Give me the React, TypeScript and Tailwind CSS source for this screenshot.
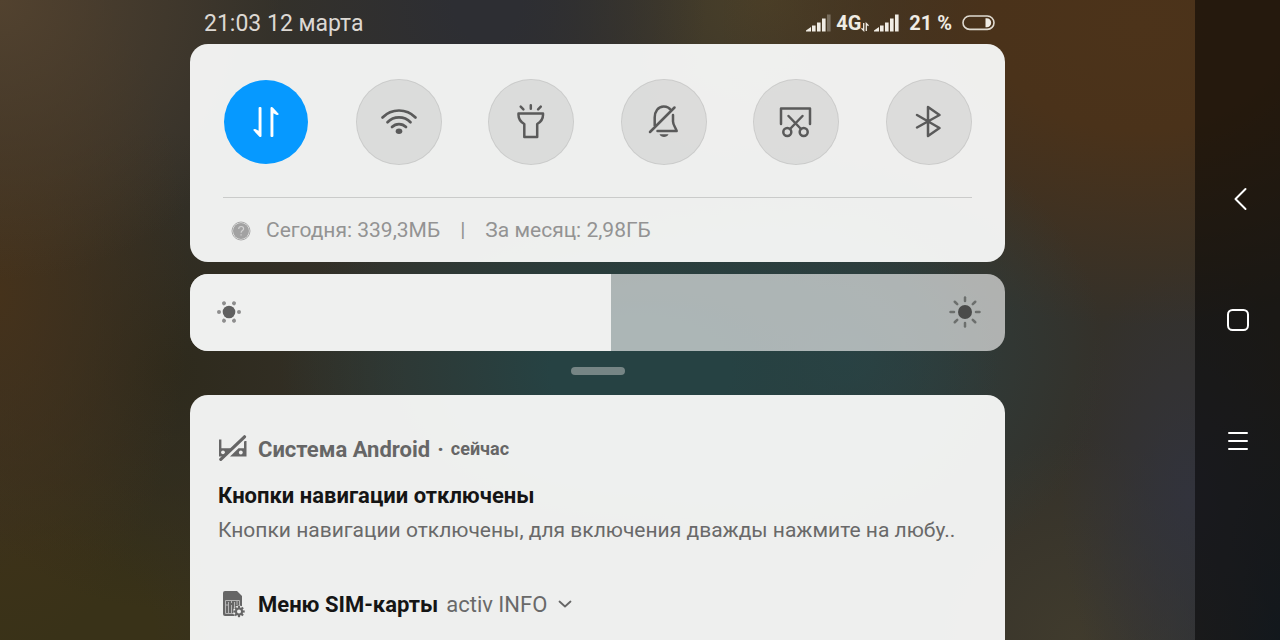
import { useState, type ReactNode } from "react";

function Toggle({ label, on = false, children }: { label: string; on?: boolean; children: ReactNode }) {
  const [active, setActive] = useState(on);
  return (
    <button
      type="button"
      aria-label={label}
      aria-pressed={active}
      onClick={() => setActive(!active)}
      className={
        active
          ? "flex size-[86px] items-center justify-center rounded-full bg-[#0699ff] bg-clip-padding border border-transparent text-white"
          : "flex size-[86px] items-center justify-center rounded-full border border-black/8 bg-black/8 text-[#5a5a5a]"
      }
    >
      <svg viewBox="0 0 40 40" className="size-10" fill="none" stroke="currentColor" strokeWidth="2.5" strokeLinecap="round" strokeLinejoin="round" aria-hidden="true">
        {children}
      </svg>
    </button>
  );
}

function Signal({ dimLast = false }: { dimLast?: boolean }) {
  return (
    <svg viewBox="0 0 25 18" className="h-[18px] w-[25px]" fill="currentColor" aria-hidden="true">
      <path d="M0 17.5v-1L5 13v4.500z" />
      <rect x="6" y="11.500" width="3.600" height="6" />
      <rect x="11" y="8.500" width="3.600" height="9" />
      <rect x="16" y="4.500" width="3.600" height="13" />
      <rect x="21" y="0.500" width="3.600" height="17" opacity={dimLast ? 0.3 : 1} />
    </svg>
  );
}

function StatusBar() {
  return (
    <header className="flex h-11 items-center justify-between pr-[10px] pl-[14px] pt-0.5 text-[#dcd8d3]">
      <time className="pt-0.5 text-[23px] leading-8">21:03 12 марта</time>
      <div className="flex items-center text-xl font-bold text-[#f0ece4]">
        <Signal dimLast />
        <span className="ml-[5px]">4G</span>
        <svg viewBox="0 0 8 10" className="mt-2 mr-[5px] h-[10px] w-2" fill="none" stroke="currentColor" strokeWidth="1.3" aria-hidden="true">
          <path d="M2.7 1v7.5L.5 6.3M5.3 9V1.5l2.2 2.2" />
        </svg>
        <Signal />
        <span className="ml-[10px]">21 %</span>
        <svg viewBox="0 0 33 16" className="ml-[10px] h-4 w-[33px]" aria-hidden="true">
          <rect x="1" y="1" width="31" height="13.4" rx="6.700" fill="none" stroke="currentColor" strokeWidth="1.600" opacity="0.9" />
          <path d="M23.500 3.200h1.200a4.500 4.500 0 0 1 0 9h-1.200z" fill="currentColor" />
        </svg>
      </div>
    </header>
  );
}

function QuickSettings() {
  return (
    <section aria-label="Быстрые настройки" className="rounded-[18px] bg-[#f5f6f5]/97 px-[33px] pt-[35px]">
      <div className="flex justify-between">
        <Toggle label="Мобильный интернет" on>
          <g stroke="none" fill="currentColor">
            <path d="M12.600 6c0-1.300 2.900-1.300 2.900 0v28c0 1.200-1.500 1.500-2.300.6l-6-6.600c.3-1 1.500-1.200 2.500-.7l2.900 1.500z" />
            <path d="M27.400 34c0 1.300-2.900 1.300-2.900 0V6c0-1.200 1.500-1.500 2.300-.6l6 6.600c-.3 1-1.500 1.200-2.500.7l-2.900-1.500z" />
          </g>
        </Toggle>
        <Toggle label="Wi-Fi">
          <path d="M3.500 15.500a23 23 0 0 1 33 0M8.500 20.200a16 16 0 0 1 23 0M13 25a9.800 9.800 0 0 1 14 0" strokeWidth="2.700" />
          <ellipse cx="20" cy="29.300" rx="3.300" ry="2.700" fill="currentColor" stroke="none" />
        </Toggle>
        <Toggle label="Фонарик">
          <path d="M7.500 11.500h24.500v1.500c0 4.500-2.200 7-5.800 9v13h-12.900V22c-3.600-2-5.800-4.500-5.800-9z" />
          <path d="M19.800 3.200v3.600M9.700 4.700l2.700 2.700M29.800 4.700l-2.700 2.700" />
        </Toggle>
        <Toggle label="Без звука">
          <path d="M10.700 24V15.500c0-6 3.400-11 9-11 3.300 0 5.800 1.400 7.300 4M29 13v6.500c0 3 2.200 5.500 3.700 9.500H13.500M30.500 5.500 6 30" />
          <path d="M15.500 32.300h9c-1.500 3.600-7.500 3.600-9 0z" fill="currentColor" stroke="none" />
        </Toggle>
        <Toggle label="Снимок экрана">
          <path d="M5 22V6.500h29V22M12.500 14 25 27M26.500 14 14 27" />
          <circle cx="11.300" cy="30" r="4" />
          <circle cx="27.700" cy="30" r="4" />
        </Toggle>
        <Toggle label="Bluetooth">
          <path d="M8 13l22.500 13L19 34V5l11.500 8L8 25.500" />
        </Toggle>
      </div>
      <div className="mt-8 flex h-[65px] items-center border-t border-black/15 pt-0.5 pl-2 text-[21px] whitespace-nowrap text-[#939393]">
        <svg viewBox="0 0 20 20" className="mr-[15px] size-5" fill="none" aria-hidden="true">
          <circle cx="10" cy="10" r="9" stroke="#a9a9a9" />
          <circle cx="10" cy="10" r="8" fill="#a2a2a2" />
          <path d="M7.700 8c.1-3.300 4.900-3.200 4.900-.3 0 1.800-2.500 2-2.500 4M10.100 13.300v1.300" stroke="#d2d2d2" strokeWidth="1.200" />
        </svg>
        <span>Сегодня: 339,3МБ</span>
        <span className="mx-5">|</span>
        <span>За месяц: 2,98ГБ</span>
      </div>
    </section>
  );
}

const rays = [0, 45, 90, 135, 180, 225, 270, 315];
const dots = [0, 60, 120, 180, 240, 300];

function Brightness() {
  const [value, setValue] = useState(51.7);
  return (
    <div className="relative mt-3 flex h-[77px] items-center justify-between overflow-hidden rounded-[18px] bg-[#f4f5f4]/65 px-6 pb-0.5">
      <span className="absolute inset-y-0 left-0 bg-[#eff0ef]" style={{ width: `${value}%` }} />
      <svg viewBox="-16 -16 32 32" className="relative -ml-px size-8" aria-hidden="true">
        <circle r="6.300" fill="#606060" />
        {dots.map((a) => (
          <circle key={a} cx="10" r="2" fill="#8e8e8e" transform={`rotate(${a})`} />
        ))}
      </svg>
      <svg viewBox="-16 -16 32 32" className="relative size-8" aria-hidden="true">
        <circle r="7" fill="#4a4b4a" />
        {rays.map((a) => (
          <path key={a} d="M11 0h3.500" stroke="#6c6f6d" strokeWidth="2.500" strokeLinecap="round" transform={`rotate(${a})`} />
        ))}
      </svg>
      <input
        type="range"
        aria-label="Яркость"
        min="0"
        max="100"
        step="0.1"
        value={value}
        onChange={(e) => setValue(Number(e.target.value))}
        className="absolute inset-0 size-full cursor-pointer opacity-0"
      />
    </div>
  );
}

function Notifications() {
  return (
    <main className="mt-5 flex-1 rounded-t-[18px] bg-[#f5f6f5]/97 px-7 pt-[38px]">
      <article>
        <div className="flex h-8 items-center text-[#666666]">
          <svg viewBox="0 0 30 28" className="mr-[10px] h-7 w-[30px]" aria-hidden="true">
            <path d="M1 4.500h2.400v8.700h9.600L5 21.500H1z" fill="currentColor" />
            <circle cx="5" cy="17.300" r="1.900" fill="#efefee" />
            <path d="M26 6h2.500v15.500H12l8.500-8.300H26z" fill="currentColor" />
            <circle cx="22.800" cy="17.500" r="1.900" fill="#efefee" />
            <path d="M5.500 25.500 29 3" stroke="#efefee" strokeWidth="1.300" />
            <path d="M2.800 24.300 26.500 1.800" stroke="currentColor" strokeWidth="3.200" strokeLinecap="round" />
          </svg>
          <span className="text-[22px] font-bold">Система Android</span>
          <span className="mx-[7px] text-[22px] font-bold">·</span>
          <span className="text-lg font-bold">сейчас</span>
        </div>
        <h2 className="mt-[15px] text-[22px] leading-8 font-bold text-[#151515]">Кнопки навигации отключены</h2>
        <p className="mt-0.5 text-[21px] leading-8 whitespace-nowrap text-[#696969]">
          Кнопки навигации отключены, для включения дважды нажмите на любу..
        </p>
      </article>
      <article className="mt-[42px] flex h-8 items-center text-[22px]">
        <svg viewBox="0 0 30 28" className="mr-[10px] h-7 w-[30px]" aria-hidden="true">
          <path d="M7 1h12l5 5v20H7a2 2 0 0 1-2-2V3a2 2 0 0 1 2-2z" fill="#666666" />
          <path d="M7.500 10.500h14v13h-14zM10.500 12v11M13.500 10v3M13.500 15v8M16.500 12v11M19 10v5M7.500 15h3" fill="none" stroke="#b5b5b5" />
          <g transform="translate(21 21.500)">
            <circle r="6" fill="#efefee" />
            {rays.map((a) => (
              <path key={a} d="M3 0h2.700" stroke="#666666" strokeWidth="2.200" transform={`rotate(${a})`} />
            ))}
            <circle r="3" fill="none" stroke="#666666" strokeWidth="2" />
          </g>
        </svg>
        <h2 className="font-bold text-[#151515]">Меню SIM-карты</h2>
        <span className="ml-2 text-[#696969]">activ INFO</span>
        <button type="button" aria-label="Развернуть" className="ml-[10px] flex size-4 items-center justify-center text-[#666666]">
          <svg viewBox="0 0 16 16" className="size-4" fill="none" stroke="currentColor" strokeWidth="1.800" strokeLinecap="round" strokeLinejoin="round" aria-hidden="true">
            <path d="m2.500 5.500 5.500 5 5.500-5" />
          </svg>
        </button>
      </article>
    </main>
  );
}

function NavButton({ label, children }: { label: string; children: ReactNode }) {
  return (
    <button type="button" aria-label={label} className="flex size-12 items-center justify-center text-white">
      <svg viewBox="0 0 24 24" className="size-6" fill="none" stroke="currentColor" strokeWidth="2" strokeLinecap="round" strokeLinejoin="round" aria-hidden="true">
        {children}
      </svg>
    </button>
  );
}

export default function App() {
  return (
    <div className="flex min-h-screen bg-[#34312a] bg-[radial-gradient(ellipse_360px_220px_at_50%_58%,#264243_0%,#264243_25%,transparent_100%),radial-gradient(ellipse_260px_240px_at_66%_56%,#2c4244_0%,transparent_100%),radial-gradient(ellipse_220px_260px_at_38%_0%,#2d2e33_0%,#2d2e33_15%,transparent_100%),radial-gradient(ellipse_420px_300px_at_89%_4%,#4c331a_0%,#4a321a_35%,transparent_100%),radial-gradient(ellipse_240px_200px_at_60%_0%,#4a4029_0%,transparent_100%),radial-gradient(ellipse_280px_280px_at_0%_0%,#52422f_0%,transparent_100%),radial-gradient(ellipse_190px_360px_at_0%_46%,#45321b_0%,transparent_100%),radial-gradient(ellipse_240px_240px_at_13%_58%,#2e2a1c_0%,transparent_100%),radial-gradient(ellipse_300px_300px_at_5%_100%,#393218_0%,#393218_30%,transparent_100%),radial-gradient(ellipse_130px_240px_at_93%_78%,#32333c_0%,transparent_100%),radial-gradient(ellipse_200px_200px_at_84%_100%,#403b2d_0%,transparent_100%),radial-gradient(ellipse_200px_260px_at_100%_100%,#24303a_0%,transparent_100%)] font-[Roboto,sans-serif]">
      <div className="flex min-w-0 flex-1 justify-center">
        <div className="flex w-full max-w-[815px] flex-col">
          <StatusBar />
          <QuickSettings />
          <Brightness />
          <div className="mt-4 h-2 w-[54px] self-center rounded-full bg-[#768585]" />
          <Notifications />
        </div>
      </div>
      <nav aria-label="Навигация" className="flex w-[85px] flex-col items-center justify-center gap-[73px] bg-black/50">
        <NavButton label="Назад">
          <path d="M19.500 2 9.500 12l10 10" />
        </NavButton>
        <NavButton label="Домой">
          <rect x="2" y="2" width="20" height="20" rx="4.500" />
        </NavButton>
        <NavButton label="Меню">
          <path d="M3 4h18M3 12h18M3 20h18" />
        </NavButton>
      </nav>
    </div>
  );
}
